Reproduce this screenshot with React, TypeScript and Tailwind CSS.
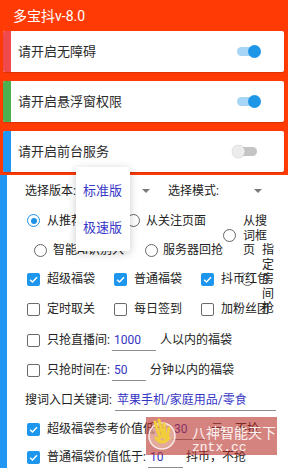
import React from "react";

const FONT = { fontFamily: 'Roboto, "Noto Sans CJK SC", sans-serif' };

function Toggle({ on }: { on: boolean }) {
  return (
    <div className="relative h-[13px] w-[29px] shrink-0">
      <div
        className={`absolute left-[5px] top-[2px] h-[9px] w-[20px] rounded-full ${
          on ? "bg-[#a6d5f5]" : "bg-[#c4c4c4]"
        }`}
      />
      <div
        className={`absolute top-0 h-[13px] w-[13px] rounded-full ${
          on ? "left-[16px] bg-[#1d96e8]" : "left-0 bg-[#ececec] shadow-[0_0_1px_rgba(0,0,0,0.35)]"
        }`}
      />
    </div>
  );
}

function PermCard({ label, stripe, on }: { label: string; stripe: string; on: boolean }) {
  return (
    <div className="flex h-[41px] overflow-hidden rounded-[2px] bg-white shadow-[0_1px_1px_rgba(0,0,0,0.15)]">
      <div className={`w-[8px] shrink-0 ${stripe}`} />
      <div className="flex flex-1 items-center pl-[7px] pr-[23px]">
        <span className="flex-1 text-[13px] text-[#2b2b2b]">{label}</span>
        <Toggle on={on} />
      </div>
    </div>
  );
}

function Radio({ checked }: { checked?: boolean }) {
  return (
    <span
      className={`flex h-[13px] w-[13px] shrink-0 items-center justify-center rounded-full border-[1.5px] ${
        checked ? "border-[#1e90e6]" : "border-[#666]"
      }`}
    >
      {checked && <span className="h-[6px] w-[6px] rounded-full bg-[#1e90e6]" />}
    </span>
  );
}

function Check({ checked }: { checked?: boolean }) {
  if (checked) {
    return (
      <span className="flex h-[13px] w-[13px] shrink-0 items-center justify-center rounded-[2px] bg-[#1e96ee]">
        <svg viewBox="0 0 12 12" className="h-[11px] w-[11px]">
          <path d="M2.3 6.2 L4.9 8.7 L9.8 3.6" fill="none" stroke="#fff" strokeWidth="1.6" />
        </svg>
      </span>
    );
  }
  return <span className="h-[13px] w-[13px] shrink-0 rounded-[2px] border-[1.5px] border-[#6a6a6a]" />;
}

function CheckItem({ label, checked }: { label: string; checked?: boolean }) {
  return (
    <div className="flex w-[87px] shrink-0 items-center gap-[7px]">
      <Check checked={checked} />
      <span className="whitespace-nowrap">{label}</span>
    </div>
  );
}

function Field({ value, w }: { value: string; w: string }) {
  return (
    <span className={`mt-[2px] inline-block h-[20px] border-b border-[#8c8c8c] pl-[2px] leading-[18px] text-[#3434c4] ${w}`}>
      {value}
    </span>
  );
}

function Caret() {
  return <span className="h-0 w-0 border-l-[4px] border-r-[4px] border-t-[4px] border-l-transparent border-r-transparent border-t-[#7a7a7a]" />;
}

export default function App() {
  return (
    <div className="relative h-[468px] w-[288px] overflow-hidden bg-white" style={FONT}>
      <div className="bg-[#ff3a05] pb-[3px] pl-[3px] pr-[4px]">
        <div className="flex h-[31px] items-center pl-[10px] pt-[1px] text-[14px] text-white">多宝抖v-8.0</div>
        <div className="flex flex-col gap-[9px]">
          <PermCard label="请开启无障碍" stripe="bg-[#f0494c]" on />
          <PermCard label="请开启悬浮窗权限" stripe="bg-[#4caf50]" on />
          <PermCard label="请开启前台服务" stripe="bg-[#2196f3]" on={false} />
        </div>
      </div>

      <div className="flex">
        <div className="w-[7px] shrink-0 bg-[#2196f3]" />
        <div className="flex flex-1 flex-col text-[12px] text-[#222]">
          <div className="flex h-[31px] items-center">
            <div className="ml-[18px] flex w-[143px] items-center pr-[18px]">
              <span className="flex-1">选择版本:</span>
              <Caret />
            </div>
            <div className="flex w-[94px] items-center">
              <span className="flex-1">选择模式:</span>
              <Caret />
            </div>
          </div>

          <div className="flex h-[29px] items-center pl-[20px]">
            <div className="flex w-[100px] shrink-0 items-center gap-[7px]">
              <Radio checked />
              <span className="whitespace-nowrap">从推荐页面</span>
            </div>
            <div className="flex w-[96px] shrink-0 items-center gap-[6px]">
              <Radio />
              <span className="whitespace-nowrap">从关注页面</span>
            </div>
            <div className="mt-[8px] flex shrink-0 items-center gap-[7px] self-start">
              <Radio />
              <span className="w-[26px] leading-[14.5px]">从搜词框页</span>
            </div>
          </div>

          <div className="flex h-[30px] items-center pl-[27px]">
            <div className="flex w-[111px] shrink-0 items-center gap-[6px]">
              <Radio />
              <span className="w-[72px] overflow-hidden whitespace-nowrap">智能AI识别入口</span>
            </div>
            <div className="flex w-[96px] shrink-0 items-center gap-[5px]">
              <Radio />
              <span className="whitespace-nowrap">服务器回抢</span>
            </div>
            <div className="mt-[8px] flex shrink-0 items-center gap-[8px] self-start">
              <Radio />
              <span className="w-[13px] leading-[14.5px]">指定房间抢</span>
            </div>
          </div>

          <div className="flex h-[28px] items-center pl-[20px]">
            <CheckItem label="超级福袋" checked />
            <CheckItem label="普通福袋" checked />
            <CheckItem label="抖币红包" checked />
          </div>
          <div className="flex h-[32px] items-center pl-[20px]">
            <CheckItem label="定时取关" />
            <CheckItem label="每日签到" />
            <CheckItem label="加粉丝团" />
          </div>

          <div className="flex h-[30px] items-center pl-[20px]">
            <Check />
            <span className="ml-[7px]">只抢直播间:</span>
            <span className="ml-[2px]">
              <Field value="1000" w="w-[44px]" />
            </span>
            <span className="ml-[4px]">人以内的福袋</span>
          </div>
          <div className="flex h-[30px] items-center pl-[20px]">
            <Check />
            <span className="ml-[7px]">只抢时间在:</span>
            <span className="ml-[2px]">
              <Field value="50" w="w-[34px]" />
            </span>
            <span className="ml-[4px]">分钟以内的福袋</span>
          </div>
          <div className="flex h-[30px] items-center pl-[18px]">
            <span>搜词入口关键词:</span>
            <span className="ml-[3px]">
              <Field value="苹果手机/家庭用品/零食" w="w-[161px]" />
            </span>
          </div>
          <div className="flex h-[28px] items-center pl-[20px]">
            <Check checked />
            <span className="ml-[7px]">超级福袋参考价值低于:</span>
            <span className="ml-[2px]">
              <Field value="30" w="w-[34px]" />
            </span>
            <span className="ml-[5px]">元，不抢</span>
          </div>
          <div className="flex h-[28px] items-center pl-[20px]">
            <Check checked />
            <span className="ml-[7px]">普通福袋价值低于:</span>
            <span className="ml-[2px]">
              <Field value="10" w="w-[35px]" />
            </span>
            <span className="ml-[3px]">抖币，不抢</span>
          </div>
        </div>
      </div>

      {/* version dropdown */}
      <div className="absolute left-[76px] top-[167px] flex h-[84px] w-[54px] flex-col rounded-[2px] bg-white pl-[7px] text-[13px] text-[#3838c8] shadow-[0_2px_8px_rgba(0,0,0,0.22)]">
        <div className="flex h-[42px] items-center pt-[6px]">标准版</div>
        <div className="flex h-[38px] items-center">极速版</div>
      </div>

      {/* watermark */}
      <div className="absolute left-[146px] top-[417px] h-[38px] w-[131px] bg-[#b9302a]/60" />
      <svg className="absolute left-[146px] top-[416px] h-[40px] w-[32px]" viewBox="0 0 32 40">
        <circle cx="16" cy="20" r="13" fill="rgba(255,240,210,0.35)" stroke="rgba(255,255,255,0.8)" strokeWidth="1.5" />
        <path d="M9 6 L14 22 M13 4 L17 21 M18 8 L19 22 M23 12 L21 23 M10 22 Q16 30 23 22" fill="none" stroke="#f2cf3a" strokeWidth="3" strokeLinecap="round" />
      </svg>
      <div className="absolute left-[192px] top-[423px] flex flex-col text-white/90">
        <span className="text-[14px] leading-[18px]" style={{ fontFamily: '"Noto Sans CJK SC", sans-serif' }}>八神智能天下</span>
        <span className="text-[13px] leading-[14px]" style={{ fontFamily: '"Liberation Mono", monospace' }}>zntx.cc</span>
      </div>
    </div>
  );
}
